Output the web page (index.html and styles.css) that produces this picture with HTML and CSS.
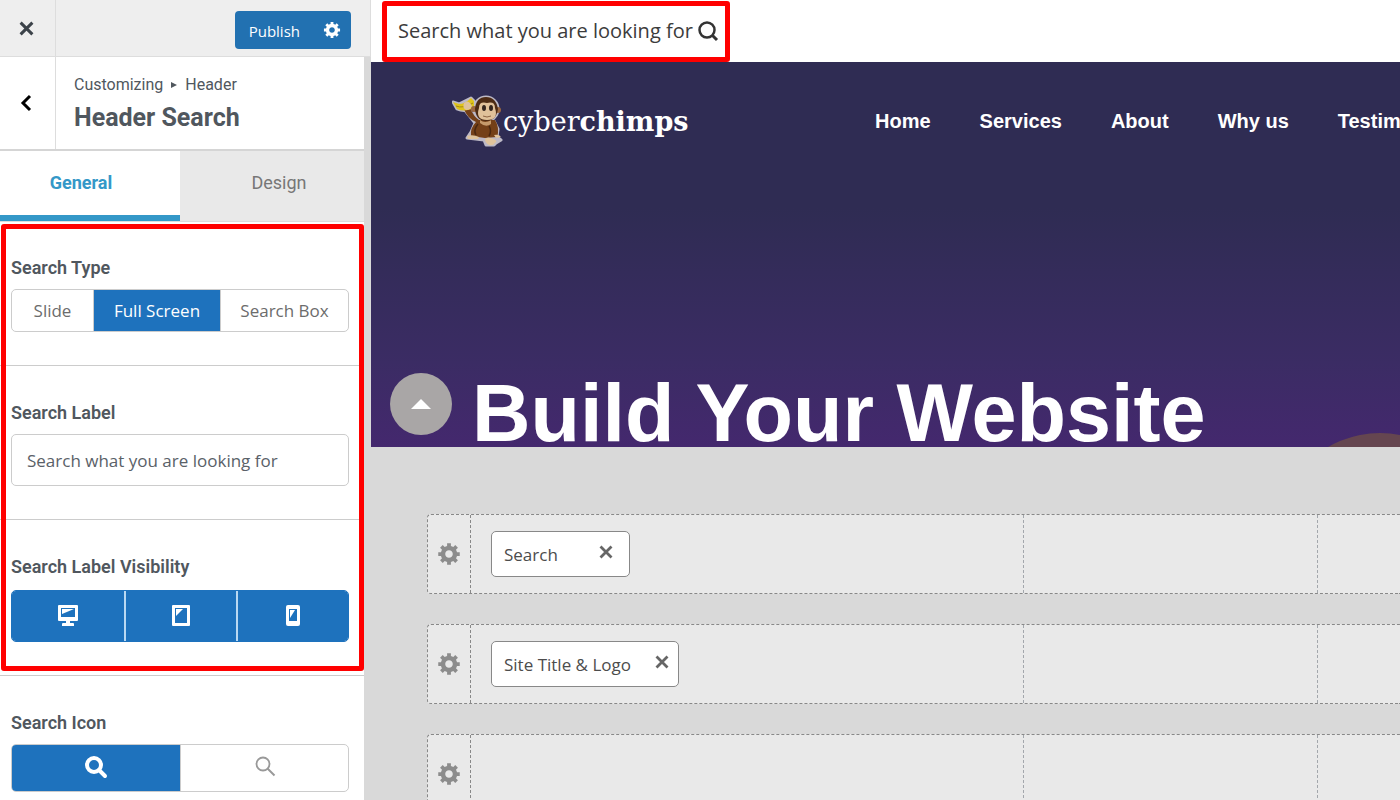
FILE: index.html
```html
<!DOCTYPE html>
<html lang="en">
<head>
  <meta charset="UTF-8">
  <meta name="viewport" content="width=device-width, initial-scale=1.0">
  <title>Customize: Header Search</title>
  <link rel="stylesheet" href="styles.css">
</head>
<body>

<svg class="sprite" aria-hidden="true">
  <symbol id="gear" viewBox="0 1 19 19">
    <path d="M18 12h-2.18c-.17.7-.44 1.35-.81 1.93l1.54 1.54-2.1 2.1-1.54-1.54c-.58.36-1.23.63-1.91.79V19H8v-2.18c-.68-.16-1.33-.43-1.91-.79l-1.54 1.54-2.12-2.12 1.54-1.54c-.36-.58-.63-1.23-.79-1.91H1V9.03h2.17c.16-.7.44-1.35.8-1.94L2.43 5.55l2.1-2.1 1.54 1.54c.58-.37 1.24-.64 1.93-.81V2h3v2.18c.68.16 1.33.43 1.91.79l1.54-1.54 2.12 2.12-1.54 1.54c.36.59.64 1.24.8 1.94H18V12zm-8.5 1.5c1.66 0 3-1.34 3-3s-1.34-3-3-3-3 1.34-3 3 1.34 3 3 3z"/>
  </symbol>
  <symbol id="cross" viewBox="0 0 14 14">
    <path d="M1.5 1.5l11 11M12.5 1.5l-11 11" fill="none" stroke="currentColor" stroke-width="2.8"/>
  </symbol>
</svg>

<div class="customizer">
  <aside class="sidebar">
    <div class="actions">
      <button class="close" aria-label="Close"><svg width="15" height="15"><use href="#cross"/></svg></button>
      <div class="publish">
        <button class="publish-btn">Publish</button>
        <button class="publish-settings" aria-label="Publish settings"><svg width="18" height="18"><use href="#gear"/></svg></button>
      </div>
    </div>

    <div class="panel">
      <div class="panel-head">
        <button class="back" aria-label="Back">
          <svg width="12" height="18" viewBox="0 0 12 18"><path d="M10 2L3 9l7 7" fill="none" stroke="#000" stroke-width="3"/></svg>
        </button>
        <div class="panel-title">
          <div class="crumbs">Customizing <svg width="6" height="6" viewBox="0 0 6 6"><path d="M0 0l6 3-6 3z"/></svg> Header</div>
          <h1>Header Search</h1>
        </div>
      </div>

      <div class="tabs">
        <button class="tab active">General</button>
        <button class="tab">Design</button>
      </div>

      <div class="controls">
        <section class="control">
          <h2>Search Type</h2>
          <div class="segments types">
            <button>Slide</button>
            <button class="on">Full Screen</button>
            <button>Search Box</button>
          </div>
        </section>

        <section class="control">
          <label for="search-label">Search Label</label>
          <input type="text" id="search-label" value="Search what you are looking for">
        </section>

        <section class="control">
          <h2>Search Label Visibility</h2>
          <div class="segments devices">
            <button class="on" aria-label="Desktop">
              <svg width="22" height="22" viewBox="0 0 22 22"><path d="M2 0h18q1 0 1 1v14q0 1-1 1h-7v2h3q1 0 1 1v2H5v-2q0-1 1-1h3v-2H2q-1 0-1-1V1q0-1 1-1z"/><path d="M4 3h14v9H4z" fill="#1e72bd"/><path d="M5 4h12L5 9z"/></svg>
            </button>
            <button class="on" aria-label="Tablet">
              <svg width="22" height="22" viewBox="0 0 22 22"><path d="M3 0h16q1 0 1 1v19q0 1-1 1H3q-1 0-1-1V1q0-1 1-1z"/><path d="M5 3h12v15H5z" fill="#1e72bd"/><path d="M6 4h7l-7 7z"/></svg>
            </button>
            <button class="on" aria-label="Mobile">
              <svg width="22" height="22" viewBox="0 0 22 22"><path d="M6 0h10q2 0 2 2v17q0 2-2 2H6q-2 0-2-2V2q0-2 2-2z"/><path d="M7 4h8v12H7z" fill="#1e72bd"/><path d="M8 5h5l-5 8z"/></svg>
            </button>
          </div>
        </section>
        <div class="highlight"></div>
      </div>

      <section class="control last">
        <h2>Search Icon</h2>
        <div class="segments icons">
          <button class="on" aria-label="Bold icon">
            <svg width="24" height="24" viewBox="0 0 24 24"><circle cx="10" cy="9" r="7" fill="none" stroke="#fff" stroke-width="4"/><path d="M15 14l6 6" stroke="#fff" stroke-width="4" stroke-linecap="round"/></svg>
          </button>
          <button aria-label="Thin icon">
            <svg width="24" height="24" viewBox="0 0 24 24"><circle cx="10" cy="8" r="6.5" fill="none" stroke="#999" stroke-width="1.8"/><path d="M14.500 12.500l7 7" stroke="#999" stroke-width="2"/></svg>
          </button>
        </div>
      </section>
    </div>
  </aside>

  <main class="preview">
    <div class="topbar">
      <button class="search-toggle">
        Search what you are looking for
        <svg width="22" height="22" viewBox="0 0 22 22"><circle cx="10" cy="10" r="7.5" fill="none" stroke="#333" stroke-width="2.5"/><path d="M15 15l5 5" stroke="#333" stroke-width="3"/></svg>
      </button>
    </div>

    <div class="hero">
      <header class="site-header">
        <a class="logo" href="#">
          <svg width="51" height="52" viewBox="0 0 51 52">
            <g stroke="#bdb9c6" stroke-width="3" stroke-linejoin="round" fill="#bdb9c6">
              <path d="M1 7l6 2 12-6 3 3v6q-8 6-17 2z"/>
              <path d="M12 14l4 0 10 12h16l4 8-1 8 4 3-5 3-2 2h-8l-2-5-17-2 4-6 4-9z"/>
              <circle cx="34" cy="14" r="12"/>
            </g>
            <path d="M12 14l6-1q4 9 9 12h16q5 8 2 17l-12 1-14-2q-1-8 5-14-9-4-12-13z" fill="#744018"/>
            <path d="M26 29q-5 6-2 11M37 31q3 5 0 10" fill="none" stroke="#4a2710" stroke-width="1.5"/>
            <path d="M28 25q5 4 11 0v4q-5 4-11-1z" fill="#c59a6b"/>
            <path d="M15 41q6-2 12 1l-1 2H16zM33 44q2-3 9 0 4 2 1 4-2 3-6 2-4-2-4-6zM42 40q5-1 7 2l-5 1z" fill="#dfc39c"/>
            <path d="M1 7l6 2q6 0 12-6l3 3v6q-8 6-17 2z" fill="#dfc31d"/>
            <path d="M4 11q7 3 17-3" fill="none" stroke="#a58a10"/>
            <path d="M12 8q3-3 6 0l2 3q-1 4-6 4-4-2-2-7z" fill="#dfc39c"/>
            <circle cx="22" cy="14" r="3" fill="#9c6841"/>
            <circle cx="46" cy="15" r="3" fill="#9c6841"/>
            <path d="M23 14Q24 2 34 2t12 12q-2 12-12 12T23 14z" fill="#4d2b14"/>
            <path d="M27 13q0-7 8-5 8-2 8 5 4 12-8 12-12 0-8-12z" fill="#e0c19a"/>
            <ellipse cx="32" cy="13" rx="2" ry="3" fill="#33251e"/>
            <ellipse cx="39" cy="13" rx="2" ry="3" fill="#33251e"/>
            <path d="M31 21q4 2 8 0" fill="none" stroke="#8d6341"/>
          </svg>
          <span>cyber<b>chimps</b></span>
        </a>
        <nav>
          <a href="#">Home</a>
          <a href="#">Services</a>
          <a href="#">About</a>
          <a href="#">Why us</a>
          <a href="#">Testimonials</a>
        </nav>
      </header>
      <h2 class="hero-title">Build Your Website</h2>
      <div class="blob"></div>
      <button class="scroll-top" aria-label="Scroll to top">
        <svg width="20" height="10" viewBox="0 0 20 10"><path d="M0 10L10 0l10 10z" fill="#fff"/></svg>
      </button>
    </div>

    <div class="builder">
      <div class="row">
        <button class="row-settings" aria-label="Row settings"><svg width="24" height="24"><use href="#gear"/></svg></button>
        <div class="cell">
          <div class="chip chip-short">Search <button aria-label="Remove Search"><svg width="14" height="14"><use href="#cross"/></svg></button></div>
        </div>
        <div class="cell"></div>
        <div class="cell"></div>
      </div>
      <div class="row">
        <button class="row-settings" aria-label="Row settings"><svg width="24" height="24"><use href="#gear"/></svg></button>
        <div class="cell">
          <div class="chip">Site Title &amp; Logo <button aria-label="Remove Site Title &amp; Logo"><svg width="14" height="14"><use href="#cross"/></svg></button></div>
        </div>
        <div class="cell"></div>
        <div class="cell"></div>
      </div>
      <div class="row">
        <button class="row-settings" aria-label="Row settings"><svg width="24" height="24"><use href="#gear"/></svg></button>
        <div class="cell"></div>
        <div class="cell"></div>
        <div class="cell"></div>
      </div>
    </div>
  </main>
</div>

</body>
</html>
```
FILE: styles.css
```css
* {
  box-sizing: border-box;
}
body {
  margin: 0;
  font-family: "Open Sans", sans-serif;
  color: #50575e;
  background: #d9d9d9;
}
h1, h2 {
  margin: 0;
}
button {
  margin: 0;
  padding: 0;
  border: 0;
  background: none;
  font: inherit;
  color: inherit;
  cursor: pointer;
}
svg {
  display: block;
  flex: none;
  fill: currentColor;
}
.sprite {
  position: absolute;
  width: 0;
  height: 0;
}
.customizer {
  display: flex;
  height: 100vh;
  overflow: hidden;
}

/* sidebar */
.sidebar {
  flex: 0 0 371px;
}
.actions {
  display: flex;
  justify-content: space-between;
  align-items: center;
  height: 57px;
  padding-right: 19px;
  background: #eee;
  border-bottom: 1px solid #ddd;
  border-right: 1px solid #ddd;
}
.close, .back {
  display: flex;
  align-items: center;
  justify-content: center;
  align-self: stretch;
  width: 56px;
  padding-right: 3px;
  border-right: 1px solid #ddd;
  color: #3c434a;
}
.publish {
  display: flex;
  height: 38px;
  margin-top: 4px;
  border-radius: 4px;
  background: #2271b1;
  color: #fff;
  font-size: 15px;
}
.publish-btn {
  padding: 2px 14px 0;
}
.publish-settings {
  display: flex;
  align-items: center;
  padding: 0 10px 0 9px;
}
.panel {
  margin-right: 7px;
  background: #fff;
}
.panel-head {
  display: flex;
  height: 94px;
  border-bottom: 2px solid #d5d5d5;
}
.panel-title {
  padding: 17px 18px;
  font-family: Roboto, sans-serif;
}
.crumbs {
  display: flex;
  align-items: center;
  gap: 8px;
  font-size: 16px;
  line-height: 22px;
}
h1 {
  margin-top: 6px;
  font-size: 25px;
  line-height: 32px;
}
.tabs {
  display: grid;
  grid-template-columns: 180px 1fr;
  height: 71px;
  border-bottom: 1px solid #ddd;
}
.tab {
  padding: 0 0 7px 14px;
  background: #e9e9e9;
  color: #777;
  font-family: Roboto, sans-serif;
  font-size: 18px;
}
.tab.active {
  padding: 0 18px 1px 0;
  background: #fff;
  border-bottom: 6px solid #3498c8;
  color: #3498c8;
  font-weight: bold;
}
.controls {
  position: relative;
}
.control {
  padding: 36px 15px 33px 11px;
  border-bottom: 1px solid #ccc;
}
.control.last {
  border-bottom: 0;
}
.control h2, .control label {
  display: block;
  margin-bottom: 10px;
  font-family: Roboto, sans-serif;
  font-size: 18px;
  font-weight: 600;
  line-height: 22px;
}
.control input {
  display: block;
  width: 100%;
  height: 52px;
  padding: 0 15px;
  border: 1px solid #ccc;
  border-radius: 5px;
  background: #fff;
  color: #5a6168;
  font-family: "Open Sans", sans-serif;
  font-size: 17px;
}
.segments {
  display: grid;
  overflow: hidden;
  border: 1px solid #ccc;
  border-radius: 5px;
  font-size: 17px;
  color: #6c6c6c;
}
.segments button {
  display: flex;
  align-items: center;
  justify-content: center;
}
.segments button + button {
  border-left: 1px solid #ccc;
}
.segments .on {
  background: #1e72bd;
  color: #fff;
}
.types {
  grid-template-columns: 81fr 127fr 128fr;
  height: 43px;
}
.controls .control:first-child {
  padding-top: 35px;
}
.devices {
  grid-template-columns: 1fr 1fr 1fr;
  height: 52px;
  margin-top: 12px;
  border-color: #1e72bd;
}
.devices button + button {
  border-left: 2px solid #b9d8f2;
}
.icons {
  grid-template-columns: 1fr 1fr;
  height: 48px;
}
.highlight {
  position: absolute;
  inset: 2px 0 5px 1px;
  border: 5px solid #f00;
  border-radius: 3px;
  pointer-events: none;
}

/* site preview */
.preview {
  flex: 1;
  min-width: 0;
}
.topbar {
  height: 62px;
  padding: 1px 11px 0;
  background: #fff;
}
.search-toggle {
  display: flex;
  align-items: center;
  gap: 4px;
  height: 61px;
  padding: 0 6px 2px 11px;
  border: 5px solid #f00;
  border-radius: 3px;
  color: #3c3c3c;
  font-size: 20px;
}
.hero {
  position: relative;
  overflow: hidden;
  background: linear-gradient(#2f2c53 0%, #2f2c53 38%, #3b2c64 78%, #44286e 100%);
  color: #fff;
  font-family: "Liberation Sans", sans-serif;
}
.site-header {
  display: flex;
  align-items: center;
  height: 118px;
  padding-left: 81px;
  white-space: nowrap;
}
.site-header a {
  color: #fff;
  text-decoration: none;
}
.logo {
  display: flex;
  align-items: center;
  flex: 0 0 423px;
  font-family: "DejaVu Serif", serif;
  font-size: 27px;
}
.site-header nav {
  display: flex;
  gap: 49px;
  font-size: 20px;
  font-weight: bold;
}
.hero-title {
  position: relative;
  z-index: 1;
  margin: 199px 0 0 101px;
  font-size: 81px;
  line-height: 68px;
  white-space: nowrap;
}
.blob {
  position: absolute;
  right: -83px;
  top: 371px;
  width: 206px;
  height: 206px;
  border-radius: 50%;
  background: #654650;
}
.scroll-top {
  position: absolute;
  left: 19px;
  bottom: 12px;
  display: flex;
  align-items: center;
  justify-content: center;
  width: 62px;
  height: 62px;
  border-radius: 50%;
  background: #a9a6a6;
}

/* header builder */
.builder {
  display: flex;
  flex-direction: column;
  gap: 30px;
  padding: 67px 0 0 56px;
}
.row {
  display: grid;
  grid-template-columns: 43px 553fr 294fr 82fr;
  height: 80px;
  border: 1px dashed #888;
  border-right: 0;
  border-radius: 4px 0 0 4px;
  background: #e9e9e9;
}
.row-settings {
  display: flex;
  align-items: center;
  justify-content: center;
  border-right: 1px dashed #888;
  color: #8c8c8c;
}
.cell {
  display: flex;
  align-items: center;
  padding: 0 20px;
  border-right: 1px dashed #a3a7ac;
}
.cell:last-child {
  border-right: 0;
}
.chip {
  display: flex;
  align-items: center;
  gap: 24px;
  height: 46px;
  padding: 0 9px 0 12px;
  border: 1px solid #888;
  border-radius: 5px;
  background: #fff;
  color: #4c4c4c;
  font-size: 17px;
  white-space: nowrap;
}
.chip-short {
  gap: 41px;
  padding-right: 16px;
}
.chip button {
  padding-bottom: 4px;
  color: #666;
}
```
